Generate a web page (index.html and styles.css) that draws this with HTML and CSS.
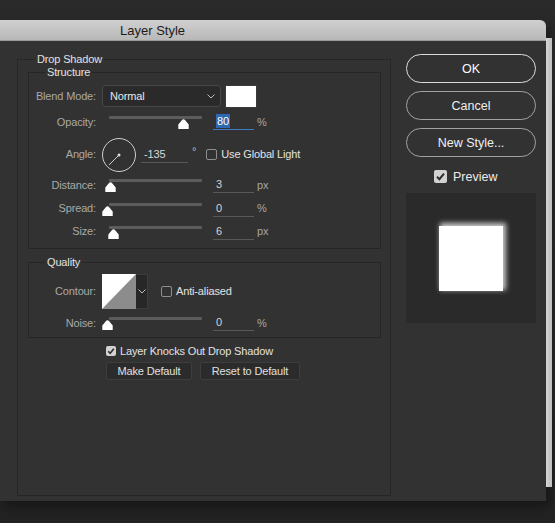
FILE: index.html
```html
<!DOCTYPE html>
<html>
<head>
<meta charset="utf-8">
<link rel="stylesheet" href="styles.css">
</head>
<body>
<div class="desktop">
  <div class="backwin"></div>
  <div class="dialog">
    <div class="titlebar">Layer Style</div>
    <div class="dbody">
      <div class="main">
        <div class="group outer">
          <div class="gtitle">Drop Shadow</div>
          <div class="group inner structure">
            <div class="gtitle">Structure</div>
            <div class="row r-blend">
              <span class="lbl">Blend Mode:</span>
              <div class="select"><span>Normal</span>
                <svg class="chev" width="8" height="5" viewBox="0 0 8 5"><polyline points="0.5,0.5 4,4 7.5,0.5" fill="none" stroke="#bdbdbd" stroke-width="1"/></svg>
              </div>
              <div class="swatch"></div>
            </div>
            <div class="row r-opacity">
              <span class="lbl">Opacity:</span>
              <div class="slider"><div class="track"></div><svg class="thumb" style="left:76px" width="11" height="10" viewBox="0 0 11 10"><path d="M5.5 0.3 Q6.4 0.3 7.2 1.3 L10.7 5.4 V10 H0.3 V5.4 L3.8 1.3 Q4.6 0.3 5.5 0.3 Z" fill="#fff"/></svg></div>
              <div class="num focus"><span class="sel">80</span></div>
              <span class="unit">%</span>
            </div>
            <div class="row r-angle">
              <span class="lbl">Angle:</span>
              <svg class="dial" width="36" height="36" viewBox="0 0 36 36"><circle cx="18" cy="18" r="16.5" fill="none" stroke="#cfcfcf" stroke-width="1"/><circle cx="18" cy="18" r="1.5" fill="#e0e0e0"/><line x1="18" y1="18" x2="8" y2="28" stroke="#cfcfcf" stroke-width="1"/></svg>
              <div class="num wide">-135</div>
              <span class="deg">°</span>
              <span class="cb"></span>
              <span class="cbtext">Use Global Light</span>
            </div>
            <div class="row r-dist">
              <span class="lbl">Distance:</span>
              <div class="slider"><div class="track"></div><svg class="thumb" style="left:3px" width="11" height="10" viewBox="0 0 11 10"><path d="M5.5 0.3 Q6.4 0.3 7.2 1.3 L10.7 5.4 V10 H0.3 V5.4 L3.8 1.3 Q4.6 0.3 5.5 0.3 Z" fill="#fff"/></svg></div>
              <div class="num">3</div>
              <span class="unit">px</span>
            </div>
            <div class="row r-spread">
              <span class="lbl">Spread:</span>
              <div class="slider"><div class="track"></div><svg class="thumb" style="left:0px" width="11" height="10" viewBox="0 0 11 10"><path d="M5.5 0.3 Q6.4 0.3 7.2 1.3 L10.7 5.4 V10 H0.3 V5.4 L3.8 1.3 Q4.6 0.3 5.5 0.3 Z" fill="#fff"/></svg></div>
              <div class="num">0</div>
              <span class="unit">%</span>
            </div>
            <div class="row r-size">
              <span class="lbl">Size:</span>
              <div class="slider"><div class="track"></div><svg class="thumb" style="left:6px" width="11" height="10" viewBox="0 0 11 10"><path d="M5.5 0.3 Q6.4 0.3 7.2 1.3 L10.7 5.4 V10 H0.3 V5.4 L3.8 1.3 Q4.6 0.3 5.5 0.3 Z" fill="#fff"/></svg></div>
              <div class="num">6</div>
              <span class="unit">px</span>
            </div>
          </div>

          <div class="group inner quality">
            <div class="gtitle">Quality</div>
            <div class="row r-contour">
              <span class="lbl">Contour:</span>
              <svg class="contour" width="34" height="35" viewBox="0 0 34 35"><rect width="34" height="35" fill="#fff"/><polygon points="0,35 34,0 34,35" fill="#8c8c8c"/></svg>
              <div class="cdrop"><svg width="8" height="5" viewBox="0 0 8 5"><polyline points="0.5,0.5 4,4 7.5,0.5" fill="none" stroke="#bdbdbd" stroke-width="1"/></svg></div>
              <span class="cb cb-aa"></span>
              <span class="cbtext">Anti-aliased</span>
            </div>
            <div class="row r-noise">
              <span class="lbl">Noise:</span>
              <div class="slider"><div class="track"></div><svg class="thumb" style="left:0px" width="11" height="10" viewBox="0 0 11 10"><path d="M5.5 0.3 Q6.4 0.3 7.2 1.3 L10.7 5.4 V10 H0.3 V5.4 L3.8 1.3 Q4.6 0.3 5.5 0.3 Z" fill="#fff"/></svg></div>
              <div class="num">0</div>
              <span class="unit">%</span>
            </div>
          </div>

          <div class="knock">
            <span class="cb checked small"><svg width="10" height="10" viewBox="0 0 10 10"><polyline points="2.2,5.2 4.2,7.2 7.8,2.8" fill="none" stroke="#2e2e2e" stroke-width="1.6"/></svg></span>
            <span class="cbtext">Layer Knocks Out Drop Shadow</span>
          </div>
          <div class="defaults">
            <div class="btn">Make Default</div>
            <div class="btn">Reset to Default</div>
          </div>
        </div>
      </div>

      <div class="side">
        <div class="pill primary">OK</div>
        <div class="pill">Cancel</div>
        <div class="pill">New Style...</div>
        <div class="preview-toggle">
          <span class="cb checked big"><svg width="13" height="13" viewBox="0 0 13 13"><polyline points="3,6.8 5.4,9.2 10,3.6" fill="none" stroke="#2e2e2e" stroke-width="2"/></svg></span>
          <span class="ptext">Preview</span>
        </div>
        <div class="preview">
          <div class="psquare"></div>
        </div>
      </div>
    </div>
  </div>
</div>
</body>
</html>
```

FILE: styles.css
```css
* { box-sizing: border-box; }
html, body { margin: 0; padding: 0; }
body {
  width: 555px;
  height: 523px;
  overflow: hidden;
  background: linear-gradient(#2a2a2a, #222222);
  font-family: "Liberation Sans", Arial, sans-serif;
}
.desktop {
  position: relative;
  width: 555px;
  height: 523px;
  padding-top: 20px;
}
.backwin {
  position: absolute;
  left: 546px;
  top: 38px;
  width: 6px;
  height: 449px;
  background: linear-gradient(to right, #d6d6d6, #bcbcbc);
}
.dialog {
  width: 546px;
  box-shadow: 4px 6px 10px rgba(0,0,0,0.35);
}
.titlebar {
  height: 21px;
  background: linear-gradient(#d0d0d0, #b8b8b8);
  border-top-right-radius: 6px;
  border-bottom: 1px solid #9a9a9a;
  color: #1c1c1c;
  font-size: 13px;
  line-height: 21px;
  padding-left: 120px;
}
.dbody {
  height: 460px;
  background: #323232;
  display: flex;
  padding-left: 17px;
}
.main { padding-top: 18px; font-size: 11px; line-height: 13px; letter-spacing: -0.15px; }
.group { border: 1px solid #262626; }
.outer { width: 374px; height: 437px; }
.gtitle {
  width: max-content;
  margin-top: -7px;
  padding: 0 2px;
  background: #323232;
  color: #e2e2e2;
  line-height: 13px;
}
.outer > .gtitle { margin-left: 17px; }
.inner > .gtitle { margin-left: 16px; }
.inner { width: 353px; margin-left: 10px; }
.structure { margin-top: 6px; padding-bottom: 5px; }
.quality { margin-top: 13px; padding-bottom: 2px; }

.row { display: flex; align-items: center; }
.lbl {
  flex: none;
  width: 67px;
  margin-right: 6px;
  text-align: right;
  color: #a9a9a9;
}
.r-blend { height: 24px; margin-top: 5px; }
.r-opacity { height: 28px; }
.r-angle { height: 37px; }
.r-dist { height: 24px; }
.r-spread { height: 23px; }
.r-size { height: 23px; }
.r-contour { height: 37px; margin-top: 4px; }
.r-noise { height: 24px; margin-top: 1px; }

.select {
  width: 119px;
  height: 22px;
  border: 1px solid #474747;
  border-radius: 3px;
  background: #2a2a2a;
  display: flex;
  align-items: center;
  justify-content: space-between;
  padding: 0 5px 0 7px;
  color: #e8e8e8;
}
.swatch {
  width: 32px;
  height: 23px;
  margin-left: 4px;
  background: #fff;
  border: 1px solid #3a3a3a;
}
.slider {
  position: relative;
  width: 107px;
  height: 12px;
  flex: none;
}
.track {
  margin: 0 7px;
  height: 3px;
  border-radius: 1px;
  background: #5c5c5c;
}
.thumb { position: absolute; top: 3px; margin-left: -0.5px; }
.num {
  width: 41px;
  height: 16px;
  margin-left: 4px;
  padding-left: 3px;
  border-bottom: 1px solid #585858;
  color: #d2d2d2;
  line-height: 15px;
}
.num.focus { border-bottom-color: #3f78c4; }
.sel { background: #2f67b0; color: #fff; padding: 1px 1px; }
.unit { margin-left: 3px; color: #a6a6a6; }
.dial { flex: none; margin-left: -1px; }
.num.wide { width: 47px; margin-left: 4px; color: #d8d8d8; }
.deg { margin-left: 4px; color: #bdbdbd; margin-top: -6px; }
.cb {
  flex: none;
  width: 11px;
  height: 11px;
  border: 1px solid #8e8e8e;
  border-radius: 2px;
  margin-left: 10px;
}
.cbtext { margin-left: 4px; color: #e2e2e2; }
.contour { flex: none; }
.cdrop {
  width: 12px;
  height: 35px;
  background: #272727;
  border: 1px solid #3c3c3c;
  border-left: none;
  display: flex;
  align-items: center;
  justify-content: center;
}
.cb-aa { margin-left: 13px; }

.knock {
  display: flex;
  align-items: center;
  height: 18px;
  margin-top: 4px;
  margin-left: 88px;
}
.cb.checked {
  margin-left: 0;
  border: none;
  background: #d2d2d2;
  display: flex;
  align-items: center;
  justify-content: center;
}
.cb.small { width: 10px; height: 10px; }
.defaults {
  display: flex;
  gap: 8px;
  margin-left: 88px;
  margin-top: 2px;
}
.btn {
  height: 18px;
  padding: 0 9px;
  border: 1px solid #3d3d3d;
  border-radius: 2px;
  background: #2b2b2b;
  color: #e0e0e0;
  line-height: 16px;
}
.defaults .btn:first-child { width: 86px; text-align: center; }
.defaults .btn:last-child { width: 100px; text-align: center; }

.side {
  width: 130px;
  margin-left: 15px;
  padding-top: 13px;
}
.pill {
  height: 29px;
  margin-bottom: 8px;
  border: 1px solid #a2a2a2;
  border-radius: 15px;
  color: #efefef;
  font-size: 12.5px;
  line-height: 29px;
  text-align: center;
}
.pill.primary { border-color: #dcdcdc; color: #fff; }
.preview-toggle {
  display: flex;
  align-items: center;
  height: 13px;
  margin-top: 13px;
  padding-left: 28px;
}
.cb.big { width: 13px; height: 13px; }
.ptext { margin-left: 6px; color: #ececec; font-size: 12.5px; }
.preview {
  width: 130px;
  height: 130px;
  margin-top: 10px;
  background: #2a2a2a;
  display: flex;
  align-items: center;
  justify-content: center;
}
.psquare {
  width: 64px;
  height: 65px;
  background: #fff;
  box-shadow: 2px -2px 5px 1px rgba(255,255,255,0.75);
}
```
